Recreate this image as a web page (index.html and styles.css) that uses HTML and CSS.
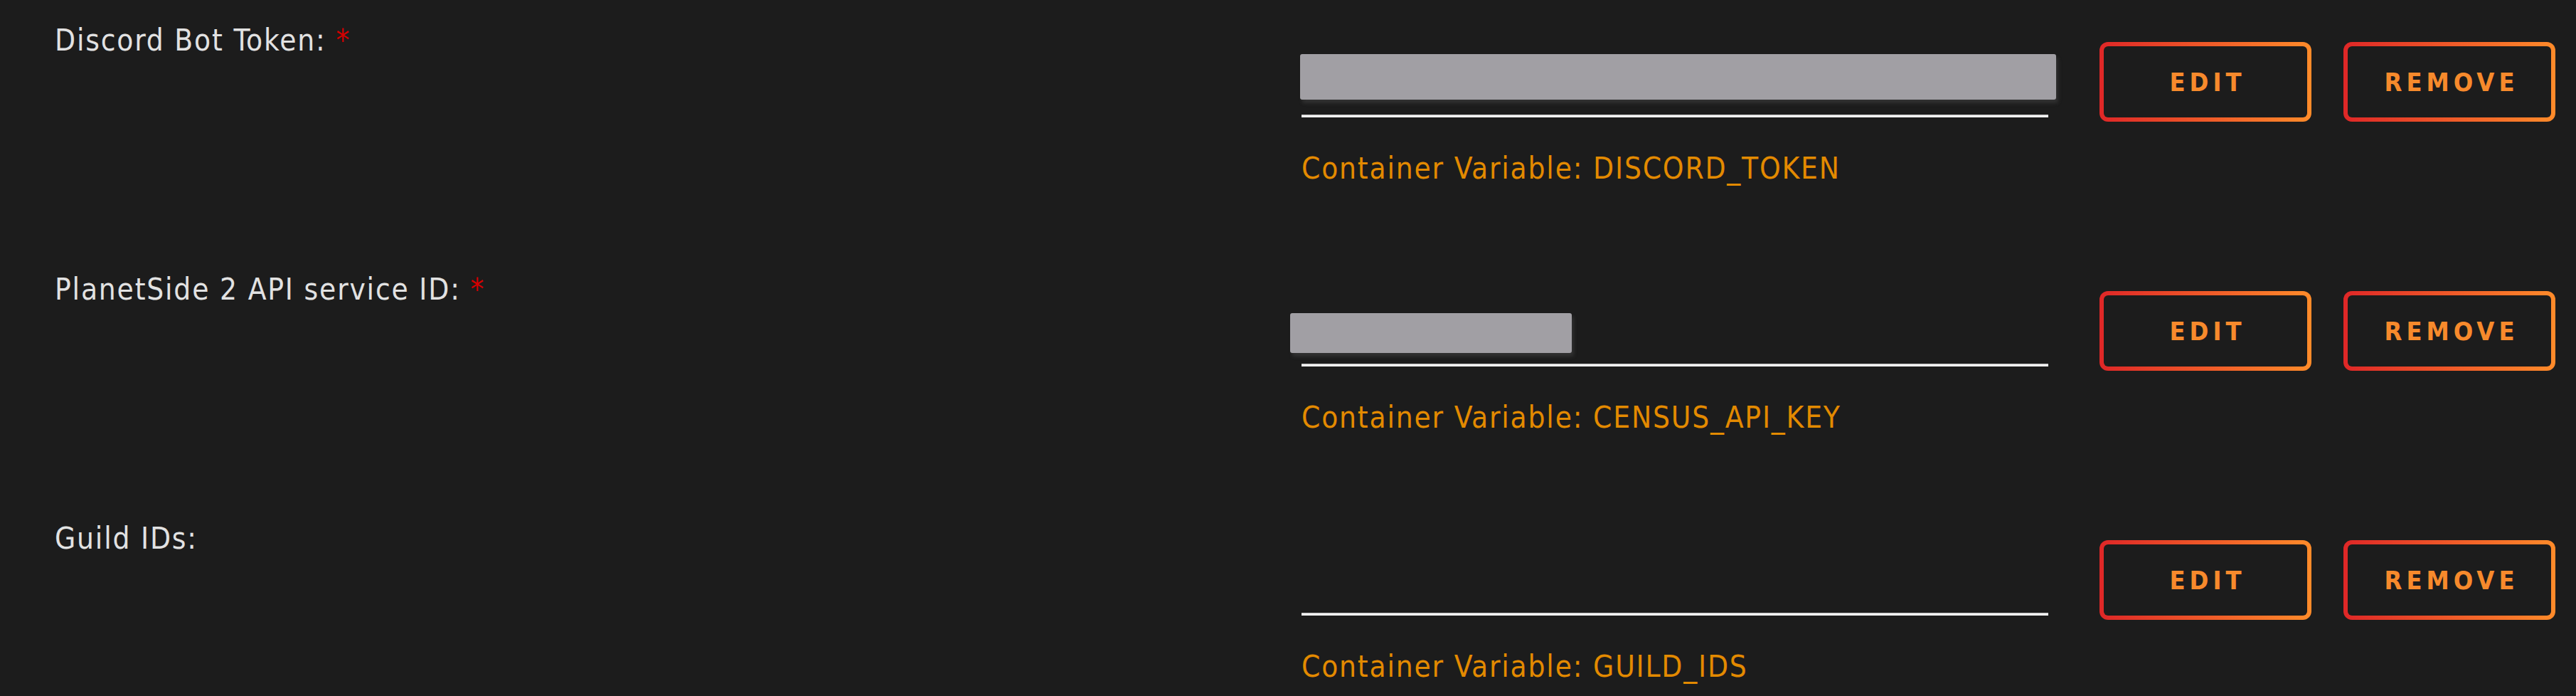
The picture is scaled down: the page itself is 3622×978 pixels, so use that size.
FILE: index.html
```html
<!DOCTYPE html>
<html lang="en">
<head>
<meta charset="utf-8">
<title>Container Variables</title>
<link rel="stylesheet" href="styles.css">
</head>
<body>
<main class="vars">
  <section class="var-row">
    <div class="var-label">Discord Bot Token: <span class="req">*</span></div>
    <div class="var-field">
      <div class="var-input"><span class="redact redact-long"></span></div>
      <div class="var-hint">Container Variable: DISCORD_TOKEN</div>
    </div>
    <div class="var-actions">
      <button class="btn" type="button">EDIT</button>
      <button class="btn" type="button">REMOVE</button>
    </div>
  </section>
  <section class="var-row">
    <div class="var-label">PlanetSide 2 API service ID: <span class="req">*</span></div>
    <div class="var-field">
      <div class="var-input"><span class="redact redact-short"></span></div>
      <div class="var-hint">Container Variable: CENSUS_API_KEY</div>
    </div>
    <div class="var-actions">
      <button class="btn" type="button">EDIT</button>
      <button class="btn" type="button">REMOVE</button>
    </div>
  </section>
  <section class="var-row">
    <div class="var-label">Guild IDs:</div>
    <div class="var-field">
      <div class="var-input"></div>
      <div class="var-hint">Container Variable: GUILD_IDS</div>
    </div>
    <div class="var-actions">
      <button class="btn" type="button">EDIT</button>
      <button class="btn" type="button">REMOVE</button>
    </div>
  </section>
</main>
</body>
</html>
```
FILE: styles.css
```css
html, body {
  margin: 0;
  padding: 0;
  background: #1c1c1c;
}
body {
  height: 978px;
  overflow: hidden;
  font-family: "DejaVu Sans Condensed", "DejaVu Sans", sans-serif;
  font-size: 42px;
  line-height: 49px;
  letter-spacing: 1.8px;
  color: #e2e2e2;
}
.vars {
  display: flex;
  flex-direction: column;
}
.var-row {
  display: flex;
  align-items: flex-start;
  height: 350px;
  padding-right: 29px;
}
.var-label {
  flex: 1;
  padding-left: 77px;
  padding-top: 32px;
  color: #e2e2e2;
}
.req {
  color: #d40000;
}
.var-field {
  width: 1050px;
  padding-top: 56px;
}
.var-input {
  position: relative;
  height: 106px;
  border-bottom: 3px solid #f0f0f0;
  box-shadow: inset 0 -1px 0 #c6c6c6;
  margin-bottom: 1px;
}
.redact {
  position: absolute;
  background: #a19fa4;
  border-radius: 3px;
  box-shadow: 3px 5px 5px rgba(90, 90, 90, 0.35);
}
.redact-long {
  top: 20px;
  left: -2px;
  width: 1063px;
  height: 64px;
}
.redact-short {
  top: 34px;
  left: -16px;
  width: 396px;
  height: 56px;
}
.var-hint {
  margin-top: 47px;
  color: #e38a00;
}
.var-actions {
  display: flex;
  gap: 45px;
  margin-left: 72px;
  padding-top: 59px;
}
.btn {
  width: 298px;
  height: 112px;
  box-sizing: border-box;
  border: 6px solid transparent;
  border-radius: 12px;
  background:
    linear-gradient(#1c1c1c, #1c1c1c) padding-box,
    linear-gradient(90deg, #df2727, #ff8b2a) border-box;
  color: #f78a2c;
  font-family: "DejaVu Sans Condensed", "DejaVu Sans", sans-serif;
  font-weight: bold;
  font-size: 36px;
  letter-spacing: 6px;
  padding: 0 0 0 6px;
  cursor: pointer;
}
```
